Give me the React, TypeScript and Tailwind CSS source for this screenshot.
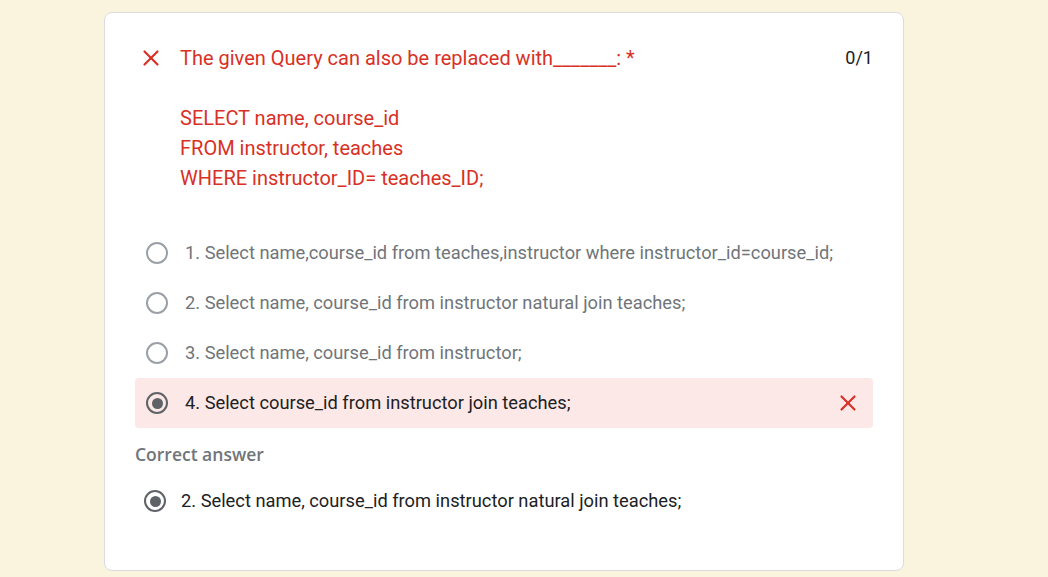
import { X } from "lucide-react"

type Option = { label: string; selected?: boolean; wrong?: boolean };

const options: Option[] = [
    { label: "1. Select name,course_id from teaches,instructor where instructor_id=course_id;" },
    { label: "2. Select name, course_id from instructor natural join teaches;" },
    { label: "3. Select name, course_id from instructor;" },
    { label: "4. Select course_id from instructor join teaches;", selected: true, wrong: true },
]

const Radio = ({ checked = false }: { checked?: boolean }) => (
    <span
        className={`flex h-[22px] w-[22px] shrink-0 items-center justify-center rounded-full border-2 ${checked ? 'border-[#5f6368]' : 'border-[#9aa0a6]'}`}
    >
        {checked && <span className="h-[11px] w-[11px] rounded-full bg-[#5f6368]" />}
    </span>
)

export default function App() {
    return (
        <div className="min-h-screen bg-[#faf3de] pt-3 font-['Roboto',sans-serif]">
            <div className="ml-[104px] w-[800px] rounded-lg border border-[#dadce0] bg-white pb-[45px] pl-[30px] pr-[30px] pt-[30px]">
                <div className="flex items-start">
                    <X className="ml-[3px] mt-[2px] h-[26px] w-[26px] shrink-0 text-[#d93025]" strokeWidth={2} />
                    <div className="ml-[16px] flex-1 whitespace-pre-line text-[20px] leading-[30px] text-[#d93025]">
                        {"The given Query can also be replaced with_______: *\n\nSELECT name, course_id\nFROM instructor, teaches\nWHERE instructor_ID= teaches_ID;"}
                    </div>
                    <span className="text-[18px] leading-[30px] text-[#202124]">0/1</span>
                </div>

                <div className="mt-[35px]">
                    {options.map(option => (
                        <div
                            key={option.label}
                            className={`flex h-[50px] items-center rounded pl-[11px] pr-[12px] ${option.wrong ? 'bg-[#fce8e6]' : ''}`}
                        >
                            <Radio checked={option.selected} />
                            <span className={`ml-[17px] flex-1 text-[18.3px] ${option.selected ? 'text-[#202124]' : 'text-[#70757a]'}`}>
                                {option.label}
                            </span>
                            {option.wrong && <X className="h-[26px] w-[26px] text-[#d93025]" strokeWidth={2} />}
                        </div>
                    ))}
                </div>

                <div className="mt-[15px] font-['Open_Sans',sans-serif] text-[17.5px] font-semibold leading-[22px] text-[#70757a]">
                    Correct answer
                </div>

                <div className="mt-[12px] flex h-[48px] items-center pl-[9px]">
                    <Radio checked />
                    <span className="ml-[15px] text-[18.3px] text-[#202124]">
                        2. Select name, course_id from instructor natural join teaches;
                    </span>
                </div>
            </div>
        </div>
    )
}
